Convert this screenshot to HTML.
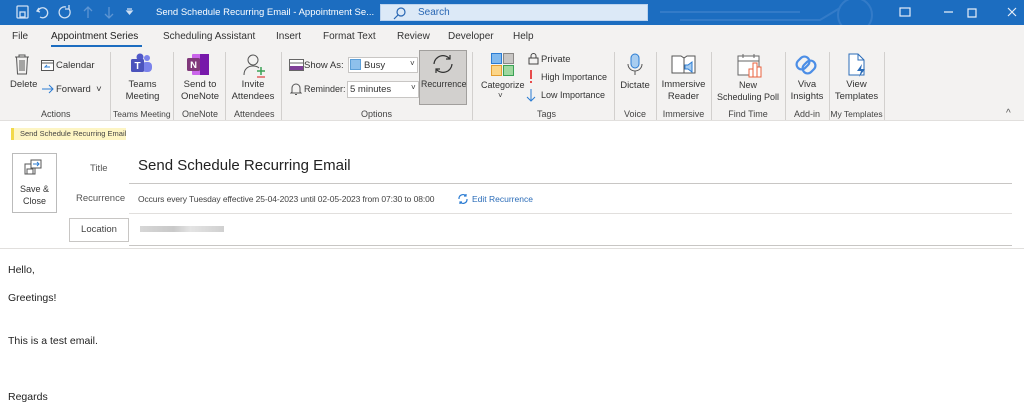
<!DOCTYPE html>
<html><head><meta charset="utf-8"><style>
*{margin:0;padding:0;box-sizing:border-box}
body{width:1024px;height:420px;overflow:hidden;background:#fff;font-family:"Liberation Sans",sans-serif;position:relative;color:#262626}
.a{position:absolute;white-space:nowrap}
.tb{background:#1c6dc0;height:25px;left:0;top:0;width:1024px}
.rib{background:#f3f2f1;top:25px;height:96px;left:0;width:1024px;border-bottom:1px solid #e1dfdd}
.f{font-size:9.5px;color:#333}
.g{font-size:9px;color:#444;top:109px}
.c{text-align:center}
.sep{width:1px;background:#d2d0ce;top:52px;height:68px}
.tab{font-size:10px;top:31px;color:#333}
</style></head><body>
<div class="a tb"></div>
<svg class="a" style="left:0;top:0" width="1024" height="25">
<g stroke="#3d82cc" fill="none" stroke-width="2" opacity=".7"><circle cx="855" cy="15" r="17"/><path d="M660 12 H800 M680 20 H820 l20 -12"/></g>
<g fill="none" stroke="#cfe0f3" stroke-width="1.3">
<rect x="17" y="6" width="11" height="12" rx="1"/><rect x="20" y="12" width="5" height="5"/>
<path d="M39 8 l-2 3 3 1 M38 11 a5 5 0 1 1 2 6"/>
<path d="M66 7 a5.5 5.5 0 1 0 3 2 M69 5 v4 h-4"/>
<path d="M88 18 V7 M84 11 l4-4 4 4 M109 7 v11 M105 14 l4 4 4-4" stroke="#5d95d3"/>
<path d="M127 11 h5 l-2.5 3z M127 9 h5" fill="#cfe0f3"/>
</g>
<g fill="none" stroke="#e6eef8" stroke-width="1.2"><rect x="900" y="8" width="10" height="8"/><path d="M944 12 h9 M968 9 h8 v8 h-8z M1008 8 l8 8 M1016 8 l-8 8"/></g>
</svg>
<div class="a" style="left:156px;top:7px;font-size:9.5px;color:#fff">Send Schedule Recurring Email  -  Appointment Se...</div>
<div class="a" style="left:380px;top:4px;width:268px;height:17px;background:#dce9f7;border:1px solid #bcd3ee"></div>
<svg class="a" style="left:393px;top:6px" width="14" height="14"><circle cx="8" cy="6" r="4" fill="none" stroke="#2866b3" stroke-width="1.2"/><path d="M5 9 l-4 4" stroke="#2866b3" stroke-width="1.2"/></svg>
<div class="a" style="left:418px;top:7px;font-size:10px;color:#2866b3">Search</div>

<div class="a rib"></div>
<div class="a tab" style="left:12px">File</div>
<div class="a tab" style="left:51px;color:#222">Appointment Series</div>
<div class="a" style="left:51px;top:45px;width:91px;height:2px;background:#1c6dc0"></div>
<div class="a tab" style="left:163px">Scheduling Assistant</div>
<div class="a tab" style="left:276px">Insert</div>
<div class="a tab" style="left:323px">Format Text</div>
<div class="a tab" style="left:397px">Review</div>
<div class="a tab" style="left:448px">Developer</div>
<div class="a tab" style="left:513px">Help</div>

<!-- Actions -->
<svg class="a" style="left:13px;top:53px" width="18" height="22"><g fill="none" stroke="#555" stroke-width="1"><path d="M2 4h14M6 4V2h6v2M3.5 4l1 17h9l1-17M7 7v11M9 7v11M11 7v11"/></g></svg>
<div class="a f" style="left:10px;top:79px">Delete</div>
<svg class="a" style="left:41px;top:59px" width="13" height="12"><rect x=".5" y="1.5" width="12" height="10" fill="#fff" stroke="#555"/><path d="M1 4h11" stroke="#555"/><path d="M9 8H4l2-2" stroke="#2b7cd3" fill="none"/></svg>
<div class="a f" style="left:56px;top:60px">Calendar</div>
<svg class="a" style="left:41px;top:84px" width="14" height="10"><path d="M1 5h11M8 1l4 4-4 4" stroke="#2b7cd3" fill="none"/></svg>
<div class="a f" style="left:56px;top:84px">Forward  &nbsp;˅</div>
<div class="a g" style="left:41px">Actions</div>
<div class="a sep" style="left:110px"></div>
<!-- Teams -->
<svg class="a" style="left:130px;top:53px" width="24" height="22"><circle cx="17" cy="5" r="3" fill="#7b83eb"/><rect x="12" y="9" width="10" height="10" rx="4" fill="#7b83eb"/><circle cx="10" cy="4" r="3.5" fill="#5059c9"/><rect x="1" y="6" width="13" height="13" rx="1.5" fill="#4b53bc"/><text x="7.5" y="16" font-size="10" fill="#fff" text-anchor="middle" font-family="Liberation Sans" font-weight="bold">T</text></svg>
<div class="a f c" style="left:115px;top:79px;width:55px;line-height:12px">Teams<br>Meeting</div>
<div class="a g" style="left:113px;font-size:8.5px">Teams Meeting</div>
<div class="a sep" style="left:173px"></div>
<!-- OneNote -->
<svg class="a" style="left:186px;top:53px" width="24" height="23"><rect x="6" y="1" width="17" height="21" rx="1" fill="#ca64ea"/><rect x="14" y="1" width="9" height="21" fill="#7719aa"/><rect x="1" y="5" width="13" height="13" rx="1.5" fill="#80397b"/><text x="7.5" y="15" font-size="9.5" fill="#fff" text-anchor="middle" font-family="Liberation Sans" font-weight="bold">N</text></svg>
<div class="a f c" style="left:175px;top:79px;width:50px;line-height:12px">Send to<br>OneNote</div>
<div class="a g" style="left:182px">OneNote</div>
<div class="a sep" style="left:225px"></div>
<!-- Attendees -->
<svg class="a" style="left:242px;top:53px" width="26" height="25"><circle cx="11" cy="7" r="5" fill="none" stroke="#555"/><path d="M2 22c0-6 4-9 9-9 3 0 5 1 6 2" fill="none" stroke="#555"/><path d="M19 14v8M15 18h8" stroke="#3aa155" stroke-width="1.5"/><path d="M15 24h8" stroke="#e06060" stroke-width="1.5"/></svg>
<div class="a f c" style="left:228px;top:79px;width:50px;line-height:12px">Invite<br>Attendees</div>
<div class="a g" style="left:234px">Attendees</div>
<div class="a sep" style="left:281px"></div>
<!-- Options -->
<svg class="a" style="left:289px;top:59px" width="15" height="12"><rect x=".5" y=".5" width="14" height="11" fill="#fff" stroke="#666"/><rect x="1" y="7" width="13" height="4" fill="#7f3f98"/><path d="M1 4h13" stroke="#666"/></svg>
<div class="a f" style="left:304px;top:60px">Show As:</div>
<div class="a" style="left:348px;top:57px;width:70px;height:16px;background:#fff;border:1px solid #c8c6c4"></div>
<div class="a" style="left:350px;top:59px;width:11px;height:11px;background:#8ec0ec;border:1px solid #5c9fd8"></div>
<div class="a f" style="left:364px;top:60px">Busy</div>
<div class="a f" style="left:410px;top:59px;font-size:8px">˅</div>
<svg class="a" style="left:290px;top:82px" width="12" height="14"><path d="M2 10V6a4 4 0 0 1 8 0v4l1 1H1zM5 12.5h2" fill="none" stroke="#555"/></svg>
<div class="a f" style="left:304px;top:84px;font-size:9px">Reminder:</div>
<div class="a" style="left:347px;top:81px;width:72px;height:17px;background:#fff;border:1px solid #c8c6c4"></div>
<div class="a f" style="left:350px;top:84px">5 minutes</div>
<div class="a f" style="left:411px;top:83px;font-size:8px">˅</div>
<div class="a" style="left:419px;top:50px;width:48px;height:55px;background:#d2d0ce;border:1px solid #a19f9d"></div>
<svg class="a" style="left:430px;top:53px" width="26" height="22"><g fill="none" stroke="#333" stroke-width="1.2"><path d="M4 11a9 9 0 0 1 16-5M22 11a9 9 0 0 1-16 5"/><path d="M20 2v4h-4M6 20v-4h4"/></g></svg>
<div class="a f" style="left:421px;top:79px;font-size:8.8px">Recurrence</div>
<div class="a g" style="left:361px">Options</div>
<div class="a sep" style="left:472px"></div>
<!-- Tags -->
<svg class="a" style="left:491px;top:53px" width="24" height="23"><rect x=".5" y=".5" width="10" height="10" fill="#80b9ee" stroke="#2b7cd3"/><rect x="12.5" y=".5" width="10" height="10" fill="#c8c6c4" stroke="#8a8886"/><rect x=".5" y="12.5" width="10" height="10" fill="#fcd587" stroke="#e39e32"/><rect x="12.5" y="12.5" width="10" height="10" fill="#9fd89f" stroke="#3aa155"/></svg>
<div class="a f" style="left:481px;top:80px;font-size:9px">Categorize</div>
<div class="a f" style="left:498px;top:91px;font-size:8px">˅</div>
<svg class="a" style="left:528px;top:53px" width="11" height="12"><rect x="1" y="5" width="9" height="6" fill="none" stroke="#444"/><path d="M3 5V3a2.5 2.5 0 0 1 5 0v2" fill="none" stroke="#444"/></svg>
<div class="a f" style="left:541px;top:54px">Private</div>
<div class="a" style="left:530px;top:70px;width:2px;height:9px;background:#e74c4c"></div>
<div class="a" style="left:530px;top:81px;width:2px;height:2px;background:#e74c4c"></div>
<div class="a f" style="left:541px;top:72px;font-size:9px">High Importance</div>
<svg class="a" style="left:526px;top:88px" width="10" height="14"><path d="M5 1v12M1 9l4 4 4-4" fill="none" stroke="#2b7cd3"/></svg>
<div class="a f" style="left:541px;top:90px;font-size:9px">Low Importance</div>
<div class="a g" style="left:537px">Tags</div>
<div class="a sep" style="left:614px"></div>
<!-- Voice -->
<svg class="a" style="left:625px;top:53px" width="20" height="24"><rect x="6" y="1" width="8" height="14" rx="4" fill="#a8cdf0" stroke="#2b7cd3"/><path d="M3 11a7 7 0 0 0 14 0M10 18v4" fill="none" stroke="#555"/></svg>
<div class="a f c" style="left:614px;top:80px;width:42px">Dictate</div>
<div class="a g c" style="left:614px;width:42px">Voice</div>
<div class="a sep" style="left:656px"></div>
<!-- Immersive -->
<svg class="a" style="left:671px;top:54px" width="26" height="22"><path d="M1 2h9l3 2 3-2h8v17H1z" fill="#fff" stroke="#555"/><path d="M13 4v15" stroke="#555"/><path d="M14 11h3l4-3v10l-4-3h-3z" fill="#a8cdf0" stroke="#2b7cd3"/></svg>
<div class="a f c" style="left:656px;top:79px;width:55px;line-height:12px">Immersive<br>Reader</div>
<div class="a g c" style="left:656px;width:55px">Immersive</div>
<div class="a sep" style="left:711px"></div>
<!-- Find time -->
<svg class="a" style="left:737px;top:53px" width="26" height="25"><rect x="1" y="3" width="21" height="19" fill="#fff" stroke="#666"/><path d="M1 8h21M6 1v4M17 1v4" stroke="#666"/><rect x="12" y="16" width="4" height="8" fill="#fff" stroke="#e8613d"/><rect x="16" y="10" width="4" height="14" fill="#fff" stroke="#e8613d"/><rect x="20" y="14" width="4" height="10" fill="#fff" stroke="#e8613d"/></svg>
<div class="a f c" style="left:711px;top:79px;width:74px;line-height:12px;font-size:9px">New<br>Scheduling Poll</div>
<div class="a g c" style="left:711px;width:74px">Find Time</div>
<div class="a sep" style="left:785px"></div>
<!-- Viva -->
<svg class="a" style="left:794px;top:53px" width="26" height="24"><g fill="none" stroke="#4c8ee6" stroke-width="2.2"><rect x="4" y="3" width="10" height="14" rx="5" transform="rotate(45 9 10)"/><rect x="10" y="7" width="10" height="14" rx="5" transform="rotate(45 15 14)"/></g></svg>
<div class="a f c" style="left:785px;top:79px;width:44px;line-height:12px">Viva<br>Insights</div>
<div class="a g c" style="left:785px;width:44px">Add-in</div>
<div class="a sep" style="left:829px"></div>
<!-- Templates -->
<svg class="a" style="left:847px;top:53px" width="22" height="25"><path d="M2 1h9l6 6v15H2z" fill="#fff" stroke="#2b6cb8"/><path d="M11 1v6h6" fill="none" stroke="#2b6cb8"/><path d="M15 11l-5 7h4l-2 6 6-8h-4z" fill="#2b6cb8"/></svg>
<div class="a f c" style="left:829px;top:79px;width:55px;line-height:12px">View<br>Templates</div>
<div class="a g c" style="left:829px;width:55px;font-size:8.5px">My Templates</div>
<div class="a sep" style="left:884px"></div>
<div class="a" style="left:1006px;top:108px;font-size:10px;color:#555">^</div>

<!-- Body -->
<div class="a" style="left:11px;top:128px;width:115px;height:12px;background:#fdf5c4;border-left:3px solid #f2d94a"></div>
<div class="a" style="left:20px;top:129px;font-size:7.5px;color:#444">Send Schedule Recurring Email</div>
<div class="a" style="left:12px;top:153px;width:45px;height:60px;border:1px solid #bbb;background:#fff"></div>
<svg class="a" style="left:24px;top:159px" width="18" height="17"><rect x="1" y="5" width="10" height="10" fill="#fff" stroke="#555"/><rect x="3" y="10" width="6" height="5" fill="none" stroke="#555"/><rect x="7" y="1" width="10" height="8" fill="#fff" stroke="#555"/><path d="M9 5h6M13 3l2 2-2 2" stroke="#2b7cd3" fill="none"/></svg>
<div class="a c" style="left:12px;top:183px;width:45px;font-size:9px;line-height:12px;color:#333">Save &amp;<br>Close</div>
<div class="a" style="left:90px;top:163px;font-size:9.5px;color:#555">Title</div>
<div class="a" style="left:138px;top:157px;font-size:15px;color:#222">Send Schedule Recurring Email</div>
<div class="a" style="left:129px;top:183px;width:883px;height:1px;background:#c8c6c4"></div>
<div class="a" style="left:76px;top:193px;font-size:9.5px;color:#555">Recurrence</div>
<div class="a" style="left:138px;top:194px;font-size:8.5px;color:#444;letter-spacing:-.1px">Occurs every Tuesday effective 25-04-2023 until 02-05-2023 from 07:30 to 08:00</div>
<svg class="a" style="left:457px;top:193px" width="12" height="12"><g fill="none" stroke="#2b7cd3" stroke-width="1.2"><path d="M2 6a4 4 0 0 1 7-3M10 6a4 4 0 0 1-7 3"/><path d="M9 1v2h-2M3 11V9h2"/></g></svg>
<div class="a" style="left:472px;top:194px;font-size:8.5px;color:#2b6cb8">Edit Recurrence</div>
<div class="a" style="left:129px;top:213px;width:883px;height:1px;background:#e1dfdd"></div>
<div class="a" style="left:69px;top:218px;width:60px;height:24px;border:1px solid #c8c6c4;background:#fff"></div>
<div class="a c" style="left:69px;top:224px;width:60px;font-size:9.5px;color:#444">Location</div>
<div class="a" style="left:140px;top:226px;width:84px;height:6px;background:linear-gradient(90deg,#ccc,#bbb 40%,#ddd 60%,#c4c4c4);opacity:.8"></div>
<div class="a" style="left:129px;top:245px;width:883px;height:1px;background:#c8c6c4"></div>
<div class="a" style="left:0;top:248px;width:1024px;height:1px;background:#e1dfdd"></div>
<div class="a" style="left:8px;top:264px;font-size:10.5px;color:#222">Hello,</div>
<div class="a" style="left:8px;top:292px;font-size:10.5px;color:#222">Greetings!</div>
<div class="a" style="left:8px;top:335px;font-size:10.5px;color:#222">This is a test email.</div>
<div class="a" style="left:8px;top:391px;font-size:10.5px;color:#222">Regards</div>
</body></html>
